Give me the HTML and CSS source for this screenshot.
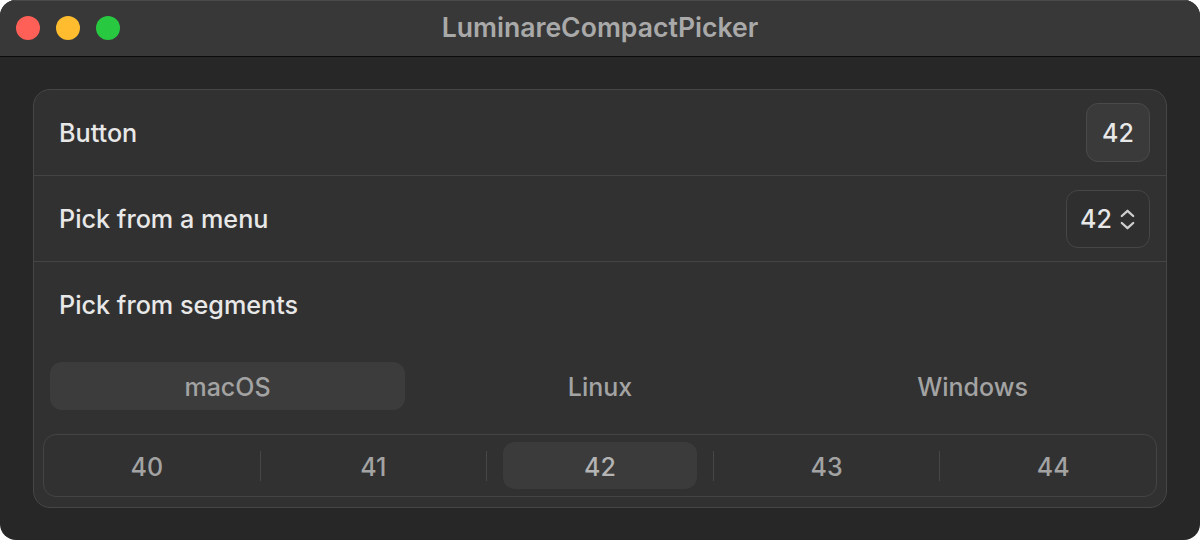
FILE: index.html
```html
<!DOCTYPE html>
<html>
<head>
<meta charset="utf-8">
<link rel="stylesheet" href="styles.css">
</head>
<body>
<div class="window">
  <div class="titlebar">
    <div class="lights">
      <span class="light red"></span>
      <span class="light yellow"></span>
      <span class="light green"></span>
    </div>
    <div class="title">LuminareCompactPicker</div>
  </div>
  <div class="content">
    <div class="card">
      <div class="row">
        <span class="label">Button</span>
        <span class="btn">42</span>
      </div>
      <div class="row">
        <span class="label">Pick from a menu</span>
        <span class="menu">42
          <svg class="chev" width="15" height="21" viewBox="0 0 15 21"><path d="M1.8 7 L7.5 1.8 L13.2 7 M1.8 14 L7.5 19.2 L13.2 14" fill="none" stroke="#cfcfcf" stroke-width="2.3" stroke-linecap="round" stroke-linejoin="round"/></svg>
        </span>
      </div>
      <div class="section">
        <div class="row row-plain">
          <span class="label">Pick from segments</span>
        </div>
        <div class="segments">
          <span class="seg selected">macOS</span>
          <span class="seg">Linux</span>
          <span class="seg">Windows</span>
        </div>
        <div class="numbers">
          <span class="num">40</span>
          <span class="divider"></span>
          <span class="num">41</span>
          <span class="divider"></span>
          <span class="num selected">42</span>
          <span class="divider"></span>
          <span class="num">43</span>
          <span class="divider"></span>
          <span class="num">44</span>
        </div>
      </div>
    </div>
  </div>
</div>
</body>
</html>
```
FILE: styles.css
```css
* { box-sizing: border-box; }
html, body { margin: 0; padding: 0; background: #ffffff; }
body {
  font-family: Inter, "Noto Sans", "Liberation Sans", sans-serif;
  width: 1200px;
  height: 540px;
  overflow: hidden;
}
.window {
  width: 1200px;
  height: 540px;
  border-radius: 16px;
  overflow: hidden;
  background: #272727;
  display: flex;
  flex-direction: column;
}
.titlebar {
  height: 57px;
  flex: none;
  background: #383838;
  border-top: 1px solid #4a4a4a;
  border-bottom: 1px solid #0c0c0c;
  position: relative;
  display: flex;
  align-items: center;
  justify-content: center;
}
.lights {
  position: absolute;
  left: 16px;
  top: 15px;
  display: flex;
  gap: 16px;
}
.light {
  width: 24px;
  height: 24px;
  border-radius: 50%;
  display: block;
}
.red { background: #fe5f57; }
.yellow { background: #febc2e; }
.green { background: #28c840; }
.title {
  color: #a9a9a9;
  font-size: 26.6px;
  font-weight: 600;
  margin-top: -3px;
}
.content {
  flex: 1;
  padding: 32px 33px 32px 33px;
}
.card {
  height: 419px;
  background: #313131;
  border: 1px solid #464646;
  border-radius: 17px;
  display: flex;
  flex-direction: column;
}
.row {
  height: 86px;
  flex: none;
  display: flex;
  align-items: center;
  justify-content: space-between;
  padding: 0 16px 0 25px;
  border-bottom: 1px solid #444444;
}
.row-plain {
  border-bottom: none;
  height: 85px;
}
.label {
  color: #e8e8e8;
  font-size: 25.2px;
  font-weight: 500;
}
.btn {
  width: 64px;
  height: 59px;
  border-radius: 12px;
  background: #3a3a3a;
  border: 1px solid #4a4a4a;
  color: #e8e8e8;
  font-size: 25px;
  font-weight: 500;
  display: flex;
  align-items: center;
  justify-content: center;
}
.menu {
  width: 84px;
  height: 58px;
  border-radius: 12px;
  border: 1px solid #464646;
  background: #2f2f2f;
  color: #e8e8e8;
  font-size: 25px;
  font-weight: 500;
  display: flex;
  align-items: center;
  padding-left: 13px;
  gap: 8px;
}
.chev { display: block; margin-top: 1px; }
.section {
  flex: 1;
  display: flex;
  flex-direction: column;
}
.segments {
  display: flex;
  justify-content: space-between;
  padding: 0 16px;
  margin-top: 15px;
}
.seg {
  width: 355px;
  height: 48px;
  border-radius: 12px;
  color: #a3a3a3;
  font-size: 25px;
  font-weight: 500;
  display: flex;
  align-items: center;
  justify-content: center;
  padding-top: 2px;
}
.seg.selected { background: #3c3c3c; }
.numbers {
  margin: 24px 9px 0 9px;
  height: 63px;
  border: 1px solid #444444;
  border-radius: 13px;
  display: flex;
  align-items: center;
  padding: 0 6px;
}
.num {
  flex: 1;
  height: 47px;
  border-radius: 12px;
  color: #a3a3a3;
  font-size: 25px;
  font-weight: 500;
  display: flex;
  align-items: center;
  justify-content: center;
  padding-top: 3px;
}
.num.selected { background: #3b3b3b; color: #b4b4b4; }
.divider {
  width: 1px;
  height: 30px;
  background: #474747;
  margin: 0 16px;
  flex: none;
}
```
